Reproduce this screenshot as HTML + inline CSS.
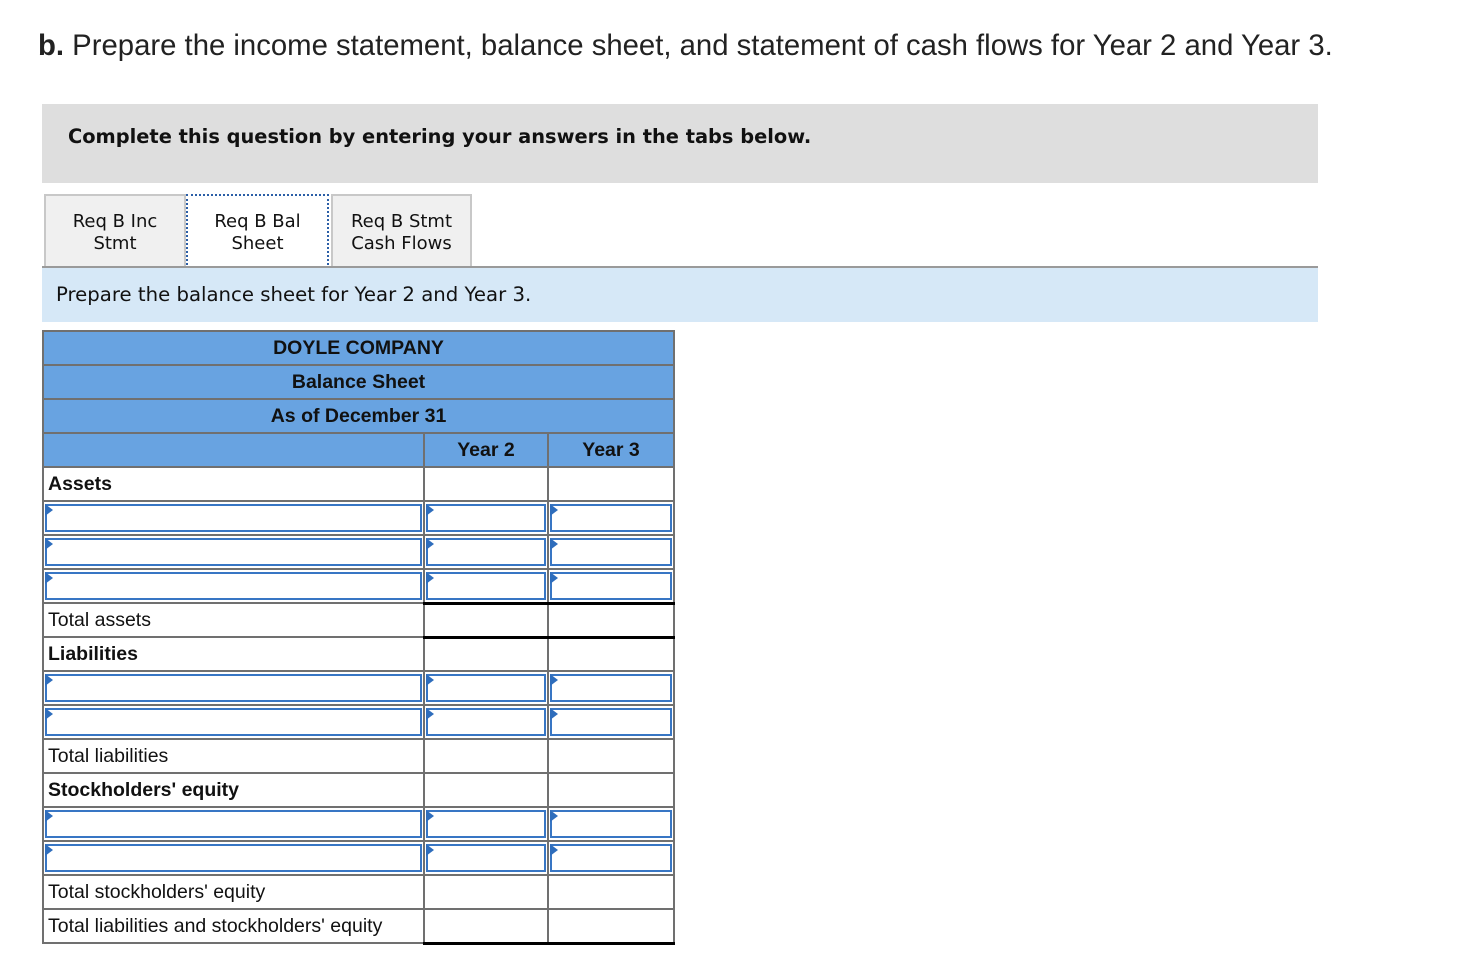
<!DOCTYPE html>
<html><head><style>
body{margin:0;width:1474px;height:954px;background:#fff;font-family:"Liberation Sans",Arial,sans-serif;position:relative;overflow:hidden}
.abs{position:absolute}
h1{position:absolute;left:38px;top:29px;margin:0;font-weight:normal;font-size:29.3px;color:#222;white-space:nowrap}
.gray{left:42px;top:104px;width:1276px;height:79px;background:#dedede}
.gray div{position:absolute;left:26px;top:21px;font-family:"DejaVu Sans",Verdana,sans-serif;font-weight:bold;font-size:19.4px;color:#111}
.tab{top:194px;height:73px;box-sizing:border-box;border:2px solid #c8c8c8;border-bottom:none;background:#f0f0f0;font-family:"DejaVu Sans",Verdana,sans-serif;font-size:18px;text-align:center;line-height:22px;padding-top:15px;color:#111}
.tab.act{background:#fff;border:2px dotted #2b5ea7;border-bottom:none;height:75px}
.line{left:42px;top:266px;width:1276px;height:2px;background:#9a9a9a}
.blue{left:42px;top:268px;width:1276px;height:54px;background:#d6e8f7}
.blue div{position:absolute;left:14px;top:15px;font-family:"DejaVu Sans",Verdana,sans-serif;font-size:19.7px;color:#111}
table{position:absolute;left:42px;top:330px;border-collapse:collapse;font-size:19.5px;table-layout:fixed}
td{border:2px solid #707070;height:32px;padding:0 4px;color:#111;box-sizing:border-box}
tr{height:34px}
.h td{background:#68a3e1;font-weight:bold;text-align:center}
td.in{padding:0 1px}
td.in div{height:28px;border:2px solid #3876c4;box-sizing:border-box;position:relative}
td.in div:before{content:"";position:absolute;left:-2px;top:-2px;border-left:8px solid #2e6dbc;border-top:6px solid transparent;border-bottom:6px solid transparent;height:0}
.b{font-weight:bold}
.tot td.n{border-bottom:3px solid #000}
</style></head><body>
<h1><b>b.</b> Prepare the income statement, balance sheet, and statement of cash flows for Year 2 and Year 3.</h1>
<div class="abs gray"><div>Complete this question by entering your answers in the tabs below.</div></div>
<div class="abs tab" style="left:44px;width:142px">Req B Inc<br>Stmt</div>
<div class="abs tab act" style="left:186px;width:143px">Req B Bal<br>Sheet</div>
<div class="abs tab" style="left:331px;width:141px">Req B Stmt<br>Cash Flows</div>
<div class="abs line"></div>
<div class="abs blue"><div>Prepare the balance sheet for Year 2 and Year 3.</div></div>
<table style="width:631px">
<colgroup><col style="width:381px"><col style="width:124px"><col style="width:126px"></colgroup>
<tr class="h"><td colspan="3">DOYLE COMPANY</td></tr>
<tr class="h"><td colspan="3">Balance Sheet</td></tr>
<tr class="h"><td colspan="3">As of December 31</td></tr>
<tr class="h"><td></td><td>Year 2</td><td>Year 3</td></tr>
<tr><td class="b">Assets</td><td></td><td></td></tr>
<tr><td class="in"><div></div></td><td class="in"><div></div></td><td class="in"><div></div></td></tr>
<tr><td class="in"><div></div></td><td class="in"><div></div></td><td class="in"><div></div></td></tr>
<tr><td class="in"><div></div></td><td class="in"><div></div></td><td class="in"><div></div></td></tr>
<tr class="tot"><td>Total assets</td><td class="n" style="border-top:3px solid #000"></td><td class="n" style="border-top:3px solid #000"></td></tr>
<tr><td class="b">Liabilities</td><td></td><td></td></tr>
<tr><td class="in"><div></div></td><td class="in"><div></div></td><td class="in"><div></div></td></tr>
<tr><td class="in"><div></div></td><td class="in"><div></div></td><td class="in"><div></div></td></tr>
<tr><td>Total liabilities</td><td></td><td></td></tr>
<tr><td class="b">Stockholders' equity</td><td></td><td></td></tr>
<tr><td class="in"><div></div></td><td class="in"><div></div></td><td class="in"><div></div></td></tr>
<tr><td class="in"><div></div></td><td class="in"><div></div></td><td class="in"><div></div></td></tr>
<tr><td>Total stockholders' equity</td><td></td><td></td></tr>
<tr class="tot"><td>Total liabilities and stockholders' equity</td><td class="n"></td><td class="n"></td></tr>
</table>
</body></html>
